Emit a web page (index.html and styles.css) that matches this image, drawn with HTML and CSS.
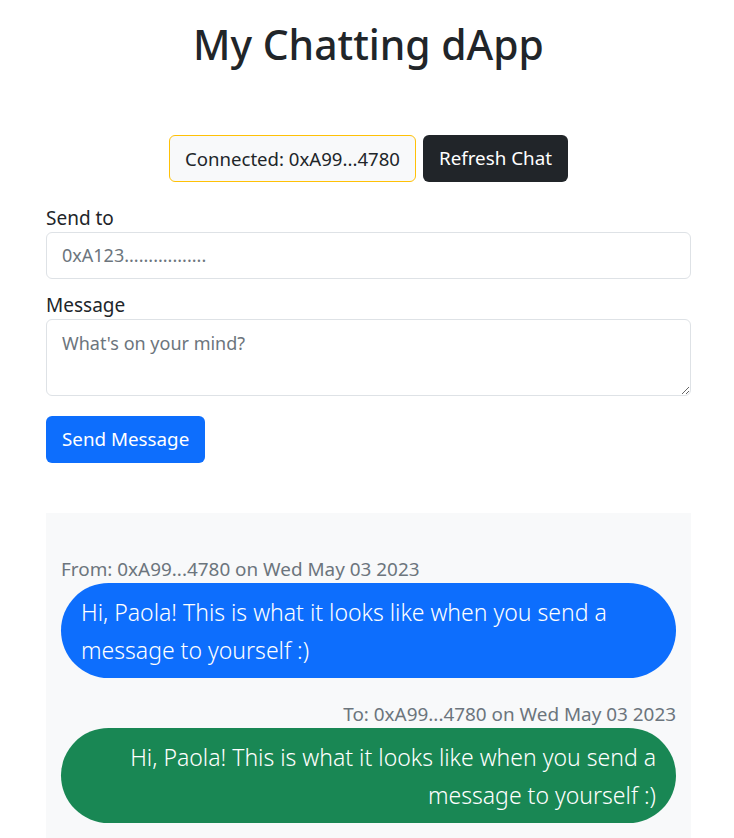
FILE: index.html
```html
<!DOCTYPE html>
<html lang="en">
<head>
<meta charset="utf-8">
<title>My Chatting dApp</title>
<link rel="stylesheet" href="styles.css">
</head>
<body>
<div class="container">
  <h1 class="title">My Chatting dApp</h1>
  <div class="actions">
    <span class="connected">Connected: 0xA99...4780</span>
    <button class="btn btn-dark">Refresh Chat</button>
  </div>
  <form class="form">
    <label class="label" for="to">Send to</label>
    <input class="control" id="to" type="text" placeholder="0xA123.................">
    <label class="label" for="msg">Message</label>
    <textarea class="control area" id="msg" placeholder="What's on your mind?"></textarea>
    <div><button type="button" class="btn btn-primary">Send Message</button></div>
  </form>
  <div class="chat">
    <div class="entry">
      <div class="meta">From: 0xA99...4780 on Wed May 03 2023</div>
      <div class="bubble blue">Hi, Paola! This is what it looks like when you send a message to yourself :)</div>
    </div>
    <div class="entry right">
      <div class="meta">To: 0xA99...4780 on Wed May 03 2023</div>
      <div class="bubble green">Hi, Paola! This is what it looks like when you send a message to yourself :)</div>
    </div>
  </div>
</div>
</body>
</html>
```
FILE: styles.css
```css
* { box-sizing: border-box; }
html, body { margin: 0; padding: 0; }
body {
  font-family: "Noto Sans", "Open Sans", sans-serif;
  color: #212529;
  background: #fff;
  font-size: 19px;
}
.container {
  margin: 0 43px 0 46px;
}
.title {
  margin: 0;
  padding-top: 20px;
  text-align: center;
  font-size: 40.8px;
  font-weight: 500;
  line-height: 1.2;
}
.actions {
  display: flex;
  justify-content: center;
  gap: 7px;
  margin-top: 66px;
}
.connected {
  display: inline-block;
  border: 1px solid #ffc107;
  background: #f8f9fa;
  border-radius: 6px;
  padding: 0 15px;
  height: 47px;
  line-height: 45px;
  font-size: 18.6px;
}
.btn {
  font-family: inherit;
  font-size: 18.8px;
  border-radius: 6px;
  border: 1px solid transparent;
  height: 47px;
  padding: 0 15px;
  cursor: pointer;
}
.btn-dark { background: #212529; color: #fff; }
.btn-primary { background: #0d6efd; color: #fff; }
.form {
  display: flex;
  flex-direction: column;
  margin-top: 23px;
}
.label {
  display: block;
  line-height: 27px;
  margin-bottom: 0;
}
.control {
  font-family: inherit;
  font-size: 18px;
  color: #212529;
  border: 1px solid #dee2e6;
  border-radius: 6px;
  padding: 0 15px;
  height: 47px;
  margin-bottom: 13px;
  width: 100%;
}
.control::placeholder { color: #6c757d; }
.area {
  height: 77px;
  padding-top: 8px;
  line-height: 30px;
  resize: vertical;
  margin-bottom: 20px;
}
.chat {
  margin-top: 50px;
  background: #f8f9fa;
  padding: 43px 15px 16px;
}
.entry { margin-bottom: 23px; }
.entry.right { text-align: right; }
.meta {
  color: #6c757d;
  font-size: 18.9px;
  line-height: 27px;
}
.bubble {
  border-radius: 48px;
  padding: 10px 20px 9px;
  color: #fff;
  font-size: 23px;
  font-weight: 300;
  line-height: 38px;
}
.blue { background: #0d6efd; text-align: left; }
.green { background: #198754; text-align: right; }
```
